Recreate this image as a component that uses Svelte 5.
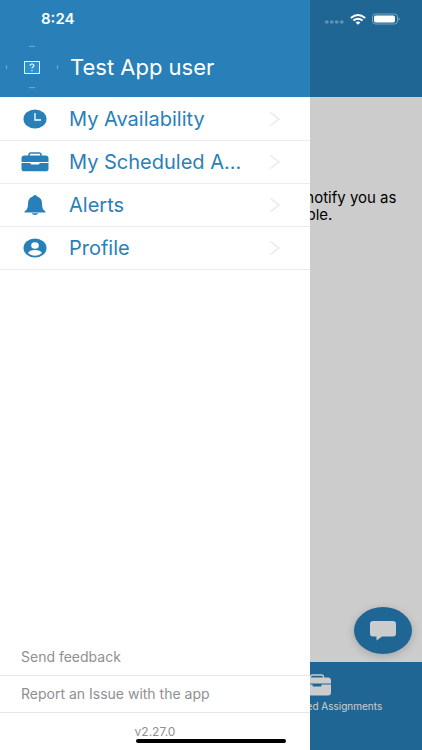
<script lang="ts">
	type Icon = 'clock' | 'briefcase' | 'bell' | 'person';

	interface MenuItem {
		label: string;
		icon: Icon;
	}

	const menu: MenuItem[] = [
		{ label: 'My Availability', icon: 'clock' },
		{ label: 'My Scheduled Assignments', icon: 'briefcase' },
		{ label: 'Alerts', icon: 'bell' },
		{ label: 'Profile', icon: 'person' }
	];

	const links = ['Send feedback', 'Report an Issue with the app'];
</script>

{#snippet briefcase()}
	<svg width="28" height="20" viewBox="0 0 28 20" aria-hidden="true">
		<path d="M8 4V3q0-2 2-2h8q2 0 2 2v1" fill="none" stroke="currentColor" stroke-width="1.5" />
		<path d="M3.5 3.5h21Q27.5 3.5 27.5 6v4H.5V6q0-2.5 3-2.5z" fill="currentColor" />
		<path d="M.5 11h9v.5q0 1 1 1h7q1 0 1-1V11h9v6q0 2.3-3 2.3h-21q-3 0-3-2.3z" fill="currentColor" />
	</svg>
{/snippet}

<div class="app">
	<div class="page">
		<header class="page-bar"></header>
		<main class="page-body">
			<p class="message">There are no assignments now. We will notify you as<br />soon as a shift becomes available.</p>
		</main>
		<nav class="tabs">
			<a class="tab" href="#availability">
				<svg width="28" height="22" viewBox="0 0 28 22" aria-hidden="true">
					<ellipse cx="14" cy="11" rx="11" ry="9" fill="currentColor" />
				</svg>
				<span>Availability</span>
			</a>
			<a class="tab" href="#assignments">
				<svg width="30" height="22" viewBox="0 0 30 22" aria-hidden="true">
					<path d="M8.500 4V3q0-2 2-2h9q2 0 2 2v1" fill="none" stroke="currentColor" stroke-width="1.3" />
					<path d="M4 3.500h22q3 0 3 3V9.500H1V6.500q0-3 3-3z" fill="currentColor" />
					<path d="M1 10.500h9.500v.8q0 1.200 1.200 1.200h6.600q1.200 0 1.200-1.200v-.8H29v8q0 3-3 3H4q-3 0-3-3z" fill="currentColor" />
				</svg>
				<span>My Scheduled Assignments</span>
			</a>
		</nav>
		<button class="chat" aria-label="Open chat">
			<svg width="26" height="20" viewBox="0 0 26 20" aria-hidden="true">
				<path d="M3 0h20q3 0 3 3v9.500q0 3-3 3H12L6.500 19.500V15.500H3q-3 0-3-3V3q0-3 3-3z" fill="currentColor" />
			</svg>
		</button>
	</div>

	<div class="shade"></div>

	<aside class="drawer">
		<header class="profile">
			<svg width="52" height="44" viewBox="0 0 52 44" role="img" aria-label="User picture">
				<path
					d="M23 1.500q3-.6 6 0M23 42.500q3 .6 6 0M.7 20q-.4 2 0 4M51.300 20q.4 2 0 4"
					fill="none"
					stroke="#fff"
					stroke-opacity="0.35"
				/>
				<rect x="18.500" y="16.500" width="15" height="12" fill="#2a93cf" stroke="#e4f3fb" />
				<path
					d="M24 20.800q0-1.800 2-1.800t2 1.600q0 1-1.200 1.500-.8.400-.8 1.500M26 25v1.300"
					fill="none"
					stroke="#fff"
					stroke-width="1.1"
				/>
			</svg>
			<h1 class="name">Test App user</h1>
		</header>

		<nav class="menu">
			{#each menu as item}
				<button class="menu-item">
					<span class="menu-icon">
						{#if item.icon === 'clock'}
							<svg width="24" height="20" viewBox="0 0 24 20" aria-hidden="true">
								<ellipse cx="12" cy="10" rx="11.5" ry="9.5" fill="currentColor" />
								<path d="M12 4v7h6" fill="none" stroke="#fff" stroke-width="1.3" />
							</svg>
						{:else if item.icon === 'briefcase'}
							{@render briefcase()}
						{:else if item.icon === 'bell'}
							<svg width="22" height="20" viewBox="0 0 22 20" aria-hidden="true">
								<path
									d="M11 0q1.800 0 2.200 1.500Q18 3 18 8.500q0 4.500 1.200 6L21.500 16.500v1H.5v-1l2.300-2q1.200-1.500 1.200-6Q4 3 8.800 1.500 9.200 0 11 0zM7.500 18.200h7Q13.500 20 11 20t-3.500-1.800z"
									fill="currentColor"
								/>
							</svg>
						{:else}
							<svg width="24" height="20" viewBox="0 0 24 20" aria-hidden="true">
								<ellipse cx="12" cy="10" rx="11.5" ry="9.5" fill="currentColor" />
								<ellipse cx="12" cy="7.500" rx="3.800" ry="3.300" fill="#fff" />
								<path d="M5 15q1.500-3 7-3t7 3q-2.700 2.700-7 2.700T5 15z" fill="#fff" />
							</svg>
						{/if}
					</span>
					<span class="menu-label">{item.label}</span>
					<svg class="chevron" width="12" height="16" viewBox="0 0 12 16" aria-hidden="true">
						<path d="M1.500 1.500 10 8 1.500 14.500" fill="none" stroke="currentColor" stroke-width="1.4" />
					</svg>
				</button>
			{/each}
		</nav>

		<footer class="footer">
			{#each links as link}
				<button class="footer-item">{link}</button>
			{/each}
			<p class="version">v2.27.0</p>
		</footer>
	</aside>

	<div class="status">
		<span class="time">8:24</span>
		<svg class="signal" width="19" height="4" viewBox="0 0 19 4" aria-hidden="true">
			<g fill="#fff" fill-opacity="0.3">
				<rect x="0" y="0.5" width="3.5" height="3" rx="1" />
				<rect x="5" y="0.5" width="3.5" height="3" rx="1" />
				<rect x="10" y="0.5" width="3.5" height="3" rx="1" />
				<rect x="15" y="0.5" width="3.5" height="3" rx="1" />
			</g>
		</svg>
		<svg width="16" height="11" viewBox="0 0 16 11" aria-hidden="true">
			<g fill="none" stroke="#fff" stroke-width="1.9">
				<path d="M.8 4Q8-2 15.200 4" />
				<path d="M3.400 6.600Q8 2.800 12.600 6.600" />
			</g>
			<path d="M5.600 8.400Q8 6.600 10.400 8.400L8 10.800z" fill="#fff" />
		</svg>
		<svg width="28" height="12" viewBox="0 0 28 12" aria-hidden="true">
			<rect x="0.5" y="1" width="25" height="10" rx="3" fill="none" stroke="#fff" stroke-opacity="0.4" />
			<rect x="2" y="2.5" width="21" height="7" rx="1.8" fill="#fff" />
			<path d="M26.500 4.500q1.200.4 1.200 1.500t-1.200 1.500z" fill="#fff" fill-opacity="0.45" />
		</svg>
	</div>
	<div class="home-indicator"></div>
</div>

<style>
	:global(body) {
		margin: 0;
	}

	.app {
		--blue: #2980b9;
		--line: #ececf0;
		position: relative;
		min-height: 100vh;
		overflow: hidden;
		font-family: Inter, 'Liberation Sans', sans-serif;
	}

	button {
		border: 0;
		background: none;
		font: inherit;
		text-align: left;
		cursor: pointer;
	}

	p,
	h1 {
		margin: 0;
	}

	svg {
		display: block;
		flex: none;
	}

	.page {
		display: flex;
		flex-direction: column;
		min-height: 100vh;
		background: #fff;
	}

	.page-bar {
		height: 97px;
		background: var(--blue);
	}

	.page-body {
		flex: 1;
		padding: 92px 16px 0;
	}

	.message {
		font-size: 15px;
		line-height: 17px;
		text-align: center;
		white-space: nowrap;
		color: #000;
	}

	.tabs {
		display: grid;
		grid-template-columns: 1fr 1fr;
		height: 88px;
		background: var(--blue);
	}

	.tab {
		display: flex;
		flex-direction: column;
		align-items: center;
		gap: 3px;
		padding-top: 12px;
		font-size: 10px;
		line-height: 14px;
		color: #fff;
		text-decoration: none;
		white-space: nowrap;
	}

	.chat {
		position: absolute;
		right: 10px;
		bottom: 96px;
		display: flex;
		align-items: center;
		justify-content: center;
		width: 58px;
		height: 47px;
		padding: 0;
		border-radius: 50%;
		background: var(--blue);
		color: #fff;
		box-shadow: 0 2px 8px rgba(0, 0, 0, 0.2);
	}

	.shade {
		position: absolute;
		inset: 0;
		background: rgba(0, 0, 0, 0.2);
	}

	.drawer {
		position: absolute;
		inset: 0 112px 0 0;
		display: flex;
		flex-direction: column;
		background: #fff;
	}

	.profile {
		display: flex;
		align-items: center;
		gap: 12px;
		box-sizing: border-box;
		height: 97px;
		padding: 36px 6px 0;
		background: var(--blue);
	}

	.name {
		font-size: 22px;
		font-weight: 400;
		line-height: 28px;
		color: #fff;
	}

	.menu {
		flex: 1;
		padding-top: 1px;
	}

	.menu-item {
		display: flex;
		align-items: center;
		box-sizing: border-box;
		width: 100%;
		height: 43px;
		padding: 0 29px 0 20px;
		border-bottom: 1px solid var(--line);
		font-size: 20px;
		line-height: 24px;
		color: var(--blue);
	}

	.menu-icon {
		display: flex;
		justify-content: center;
		width: 29px;
		margin-right: 20px;
	}

	.menu-label {
		flex: 1;
		min-width: 0;
		margin-right: 24px;
		overflow: hidden;
		text-overflow: ellipsis;
		white-space: nowrap;
	}

	.chevron {
		color: #e8e8ee;
	}

	.footer {
		color: #8f8f94;
		font-size: 14px;
		line-height: 16px;
	}

	.footer-item {
		display: block;
		box-sizing: border-box;
		width: 100%;
		height: 37px;
		padding: 0 21px;
		border-bottom: 1px solid #e2e8ec;
		color: inherit;
	}

	.version {
		padding: 11px 0 10px;
		font-size: 12px;
		text-align: center;
	}

	.status {
		position: absolute;
		inset: 10px 22px auto 41px;
		display: flex;
		align-items: center;
		gap: 6px;
		height: 18px;
		color: #fff;
	}

	.time {
		flex: 1;
		font-size: 15px;
		font-weight: 600;
		line-height: 18px;
	}

	.signal {
		align-self: flex-end;
		padding-bottom: 4px;
	}

	.home-indicator {
		position: absolute;
		bottom: 7px;
		left: 50%;
		width: 150px;
		height: 4px;
		margin-left: -75px;
		border-radius: 2px;
		background: #000;
	}
</style>
